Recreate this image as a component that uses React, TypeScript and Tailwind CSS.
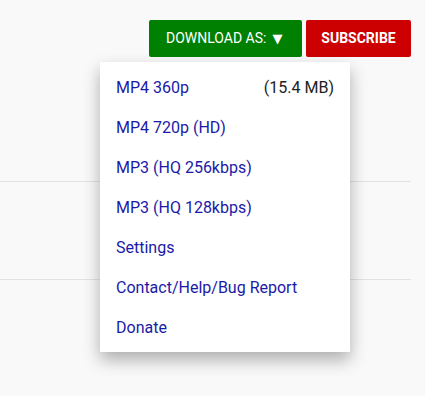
const items = [
  { label: 'MP4 360p', size: '(15.4 MB)' },
  { label: 'MP4 720p (HD)' },
  { label: 'MP3 (HQ 256kbps)' },
  { label: 'MP3 (HQ 128kbps)' },
  { label: 'Settings' },
  { label: 'Contact/Help/Bug Report' },
  { label: 'Donate' },
];

const App = () => {
  return (
    <div className="h-[396px] w-full overflow-hidden bg-[#f9f9f9] font-['Roboto',sans-serif]">
      <div className="flex justify-end gap-1 pt-5 pr-[14px]">
        <div className="relative">
          <button className="flex h-[37px] w-[153px] items-center gap-[6px] rounded-[2px] bg-[#008000] pl-[17px] text-[14px] text-white">
            <span>DOWNLOAD AS:</span>
            <span className="font-['DejaVu_Sans',sans-serif] text-[13px]">▼</span>
          </button>
          <div className="absolute left-[-49px] top-[42px] z-10 w-[250px] bg-white pt-[6px] pb-[4px] shadow-[0_8px_16px_0_rgba(0,0,0,0.3)]">
            {items.map((item) => (
              <div
                key={item.label}
                className="flex justify-between px-4 py-2 text-[16px] leading-6 text-[#1a1aa8]"
              >
                <span>{item.label}</span>
                {item.size && <span className="text-[#222]">{item.size}</span>}
              </div>
            ))}
          </div>
        </div>
        <button className="h-[37px] w-[105px] rounded-[2px] bg-[#cc0000] text-[14px] font-bold text-white">
          SUBSCRIBE
        </button>
      </div>
      <div className="mt-[124px] mr-[14px] h-[98px] border-t border-[#e2e2e2]" />
      <div className="mr-[14px] border-t border-[#e2e2e2]" />
    </div>
  );
};

export default App;
